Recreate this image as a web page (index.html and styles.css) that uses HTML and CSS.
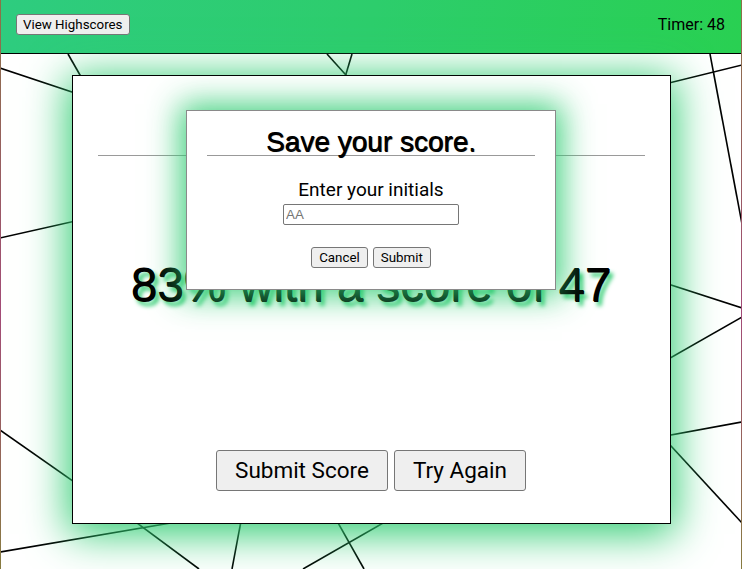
FILE: index.html
```html
<!DOCTYPE html>
<html lang="en">
<head>
<meta charset="utf-8">
<title>Quiz</title>
<link rel="stylesheet" href="styles.css">
</head>
<body>
<svg class="backdrop" width="742" height="569" viewBox="0 0 742 569" aria-hidden="true">
  <g stroke="#000" stroke-width="1.6" fill="none">
    <path d="M68 54 L100 110"/>
    <path d="M0 68 L120 108"/>
    <path d="M327 54 L372 104"/>
    <path d="M352 54 L340 94"/>
    <path d="M710 54 L742 224"/>
    <path d="M742 65 L600 100"/>
    <path d="M600 262 L742 308"/>
    <path d="M742 317 L600 398"/>
    <path d="M742 422 L600 448"/>
    <path d="M742 523 L600 369"/>
    <path d="M0 238 L120 211"/>
    <path d="M0 430 L120 514"/>
    <path d="M0 552 L200 518"/>
    <path d="M110 503 L199 569"/>
    <path d="M245 500 L232 569"/>
    <path d="M328 505 L364 569"/>
    <path d="M418 503 L303 569"/>
  </g>
</svg>

<header class="topbar">
  <button class="btn-small">View Highscores</button>
  <div class="timer">Timer: 48</div>
</header>

<main class="card">
  <hr class="card-rule">
  <div class="result">83% with a score of 47</div>
  <div class="actions">
    <button class="btn-big">Submit Score</button>
    <button class="btn-big">Try Again</button>
  </div>
</main>

<div class="modal">
  <h2 class="modal-title">Save your score.</h2>
  <hr class="modal-rule">
  <label class="modal-label" for="initials">Enter your initials</label>
  <input id="initials" class="modal-input" type="text" placeholder="AA">
  <div class="modal-actions">
    <button class="btn-small">Cancel</button>
    <button class="btn-small">Submit</button>
  </div>
</div>
</body>
</html>
```

FILE: styles.css
```css
html {
  height: 100%;
  overflow: hidden;
  background: linear-gradient(to bottom, #8a7346, #a34b77 55%, #877b40);
}

body {
  margin: 0 1px;
  min-height: 100%;
  position: relative;
  overflow: hidden;
  background: #fff;
  font-family: Roboto, "Liberation Sans", sans-serif;
  color: #000;
}

.backdrop {
  position: absolute;
  top: 0;
  left: -1px;
  z-index: 0;
}

.topbar {
  position: relative;
  z-index: 1;
  display: flex;
  justify-content: space-between;
  align-items: flex-start;
  padding: 14px 16px 0 15px;
  box-sizing: border-box;
  height: 54px;
  border-bottom: 1px solid #000;
  background: linear-gradient(100deg, #2ecc7f 0%, #2dcd6c 50%, #29d052 100%);
}

.timer {
  font-size: 16px;
  line-height: 20px;
  margin-top: 1px;
}

.btn-small {
  font-family: Roboto, sans-serif;
  font-size: 13.33px;
  line-height: 17px;
  padding: 1px 7px;
  border: 1px solid #767676;
  border-radius: 3px;
  background: #efefef;
  color: #000;
}

.topbar .btn-small {
  padding: 1px 6px;
}

.card {
  position: relative;
  z-index: 1;
  box-sizing: border-box;
  width: 599px;
  height: 449px;
  margin: 21px auto 0;
  padding: 79px 25px 32px;
  border: 1px solid #000;
  background: #fff;
  box-shadow: 0 6px 40px 4px #2ecc71;
  display: flex;
  flex-direction: column;
}

.card-rule {
  border: 0;
  border-top: 1px solid #9a9a9a;
  margin: 0;
  height: 0;
}

.result {
  margin-top: 102px;
  font-family: "Liberation Sans", Arial, sans-serif;
  font-size: 47.5px;
  line-height: 54px;
  text-align: center;
  white-space: nowrap;
  text-shadow: 0.6px 0.6px 0 #000, 4px 5px 4px #2ecc71;
}

.actions {
  margin-top: auto;
  display: flex;
  justify-content: center;
  gap: 6px;
}

.btn-big {
  font-family: Roboto, sans-serif;
  font-size: 22.5px;
  line-height: 25px;
  padding: 7px 18px;
  border: 1px solid #767676;
  border-radius: 3px;
  background: #efefef;
  color: #000;
}

.modal {
  position: absolute;
  z-index: 2;
  top: 110px;
  left: 50%;
  transform: translateX(-50%);
  box-sizing: border-box;
  width: 370px;
  padding: 17px 20px 21px;
  border: 1px solid #8a8a8a;
  background: #fff;
  box-shadow: 0 0 30px 6px rgba(46, 204, 113, 0.9);
  text-align: center;
}

.modal-title {
  margin: 0;
  font-family: "Liberation Sans", Arial, sans-serif;
  font-weight: normal;
  font-size: 28px;
  line-height: 27px;
  text-shadow: 0.6px 0.6px 0 #000, 1px 1px 1px rgba(0, 0, 0, 0.4);
}

.modal-rule {
  border: 0;
  border-top: 1px solid #999;
  margin: 0;
  height: 0;
}

.modal-label {
  display: block;
  margin-top: 23px;
  font-size: 19px;
  line-height: 21px;
}

.modal-input {
  display: block;
  box-sizing: border-box;
  width: 176px;
  height: 21px;
  margin: 4px auto 0;
  padding: 1px 2px;
  border: 1px solid #767676;
  border-radius: 2px;
  font-family: "Liberation Sans", Arial, sans-serif;
  font-size: 13.33px;
}

.modal-input::placeholder {
  color: #757575;
}

.modal-actions {
  margin-top: 22px;
  display: flex;
  justify-content: center;
  gap: 5px;
}
```
